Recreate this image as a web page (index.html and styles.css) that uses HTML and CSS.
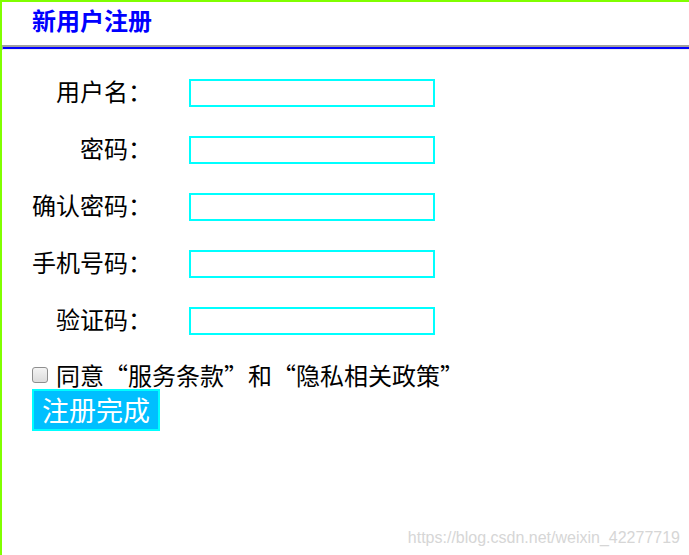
FILE: index.html
```html
<!DOCTYPE html>
<html lang="zh">
<head>
<meta charset="utf-8">
<title>新用户注册</title>
<link rel="stylesheet" href="styles.css">
</head>
<body>
<div class="page">
  <header class="head">
    <h1 class="title">新用户注册</h1>
  </header>
  <div class="rule"></div>
  <form class="form">
    <div class="grid">
      <label class="lbl">用户名：</label><input class="field" type="text">
      <label class="lbl">密码：</label><input class="field" type="password">
      <label class="lbl">确认密码：</label><input class="field" type="password">
      <label class="lbl">手机号码：</label><input class="field" type="text">
      <label class="lbl">验证码：</label><input class="field" type="text">
    </div>
    <div class="agree">
      <input class="check" type="checkbox"><span>同意“服务条款”和“隐私相关政策”</span>
    </div>
    <button class="submit" type="button">注册完成</button>
  </form>
  <div class="watermark">https://blog.csdn.net/weixin_42277719</div>
</div>
</body>
</html>
```
FILE: styles.css
```css
html, body {
  margin: 0;
  padding: 0;
  background: #fff;
}
.page {
  position: relative;
  box-sizing: border-box;
  min-height: 555px;
  border-top: 2px solid #80ff00;
  border-left: 2px solid #80ff00;
  font-family: "Noto Sans CJK SC", "Microsoft YaHei", sans-serif;
  color: #000;
}
.head {
  height: 43px;
  padding-left: 30px;
  display: flex;
  align-items: flex-start;
}
.title {
  margin: 0;
  padding-top: 4px;
  font-size: 24px;
  line-height: 28px;
  font-weight: bold;
  color: #0000ff;
}
.rule {
  height: 2px;
  background: #0000ff;
  border-top: 2px solid #a0a0a0;
  border-left: 1px solid #a0a0a0;
  border-bottom: 1px solid #eeeeee;
}
.form {
  padding: 29px 0 0 30px;
}
.grid {
  display: grid;
  grid-template-columns: 120px 246px;
  grid-auto-rows: 28px;
  column-gap: 37px;
  row-gap: 29px;
  align-items: center;
}
.lbl {
  align-self: start;
  text-align: right;
  font-size: 24px;
  line-height: 24px;
  white-space: nowrap;
}
.field {
  box-sizing: border-box;
  width: 246px;
  height: 28px;
  margin: 0;
  border: 2px solid #00ffff;
  outline: none;
  background: #fff;
}
.agree {
  margin-top: 27px;
  display: flex;
  align-items: center;
  font-size: 24px;
  line-height: 28px;
}
.agree span {
  line-height: 26px;
  align-self: flex-start;
}
.check {
  appearance: none;
  -webkit-appearance: none;
  box-sizing: border-box;
  width: 16px;
  height: 16px;
  margin: 0 8px 0 0;
  border: 1px solid #8f8f8f;
  border-radius: 3px;
  background: linear-gradient(#f4f4f4, #dcdcdc);
}
.submit {
  display: block;
  margin-top: 1px;
  box-sizing: border-box;
  height: 42px;
  padding: 0 8px;
  border: 2px solid #00ffff;
  background: #00bfff;
  color: #fff;
  font-family: "Noto Sans CJK SC", "Microsoft YaHei", sans-serif;
  font-size: 27px;
  line-height: 36px;
  cursor: pointer;
}
.watermark {
  position: absolute;
  right: 9px;
  bottom: 8px;
  font-family: "Liberation Sans", Arial, sans-serif;
  font-size: 16px;
  line-height: 18px;
  color: #d6d6d6;
}
```
